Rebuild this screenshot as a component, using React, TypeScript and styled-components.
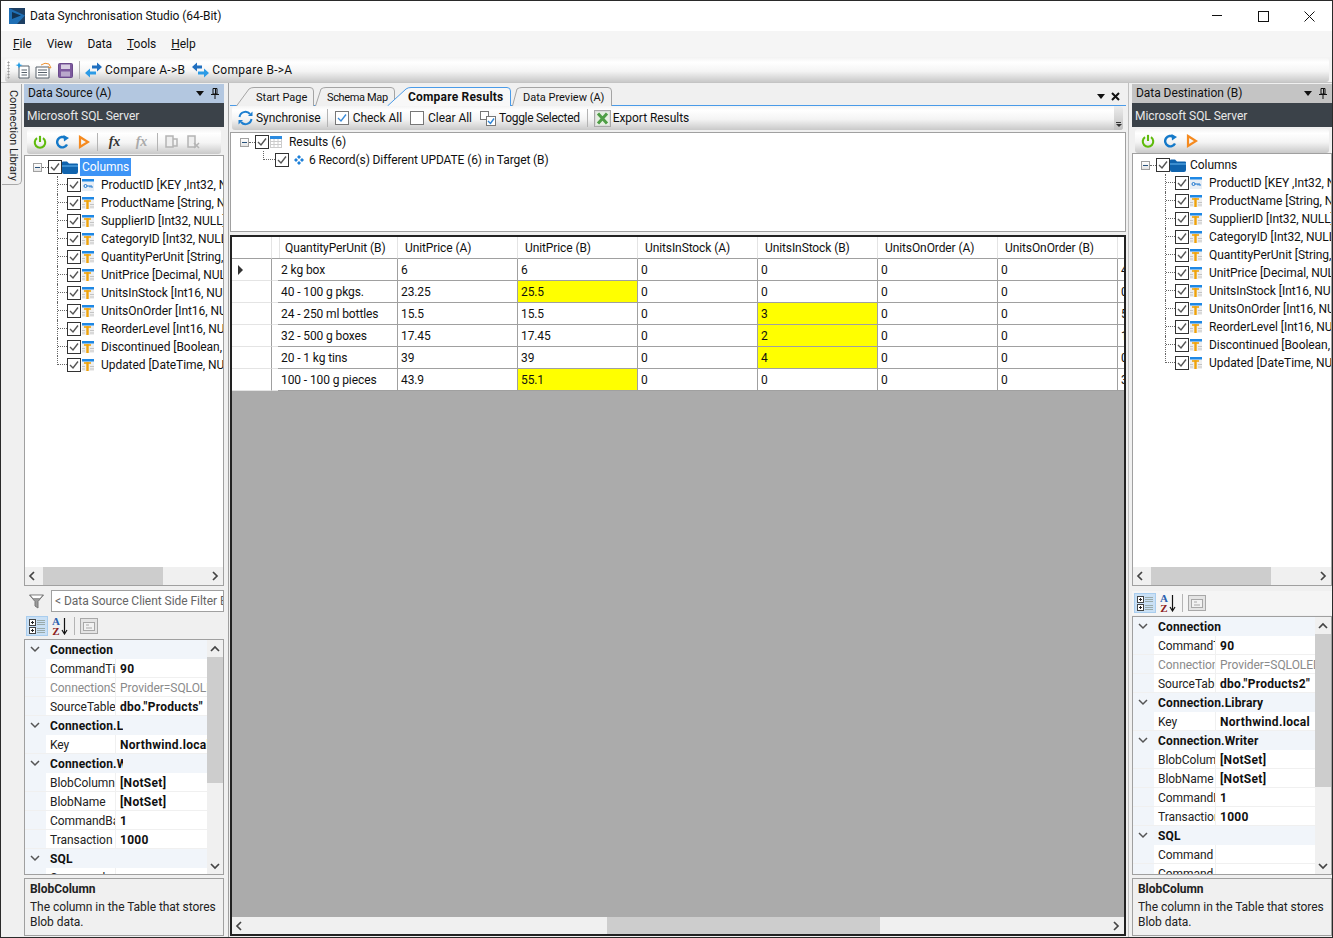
import React from "react";
import styled, { createGlobalStyle } from "styled-components";

const Global = createGlobalStyle`
  html, body { margin: 0; padding: 0; background: #f0f0f0; }
  * { box-sizing: border-box; }
  #root { width: 1333px; height: 938px; overflow: hidden; }
`;

const Win = styled.div`
  width: 1333px; height: 938px; display: flex; flex-direction: column;
  border: 1px solid #2a2a2a; background: #f0f0f0; letter-spacing: -0.05px;
  font-family: Roboto, "Liberation Sans", sans-serif; font-size: 12px; color: #111; overflow: hidden;
`;
const TitleBar = styled.div`
  height: 30px; background: #fff; display: flex; align-items: center; padding-left: 8px; flex: none;
`;
const TitleText = styled.span` margin-left: 4px; flex: 1; `;
const WinControls = styled.div` display: flex; align-items: center; `;
const WinBtn = styled.div` width: 46px; height: 30px; display: flex; align-items: center; justify-content: center; `;
const MenuBar = styled.div`
  height: 26px; flex: none; background: #f5f5f5; display: flex; align-items: center; padding-left: 12px; gap: 15px;
`;
const MenuItem = styled.span` u { text-decoration: underline; } `;
const TopStrip = styled.div` height: 26px; flex: none; background: #f3f3f3; padding: 1px 3px 1px 4px; `;
const Bar = styled.div<{ $radius?: number }>`
  display: flex; align-items: center; height: 100%;
  background: linear-gradient(#f4f4f4 0%, #ffffff 18%, #f4f4f4 55%, #c9c9c9 100%);
  border-radius: ${p => p.$radius ?? 3}px;
`;
const Grip = styled.div`
  width: 3px; height: 18px; margin: 0 5px 0 2px;
  background-image: radial-gradient(#9a9a9a 45%, transparent 50%);
  background-size: 3px 3px;
`;
const Sep = styled.div<{ $m?: string }>` width: 1px; height: 18px; background: #b4b4b4; margin: ${p => p.$m ?? "0 5px"}; flex: none; `;
const Ico = styled.span<{ $ml?: number; $mr?: number }>`
  display: inline-flex; flex: none; margin-left: ${p => p.$ml ?? 0}px; margin-right: ${p => p.$mr ?? 0}px;
`;
const BarText = styled.span<{ $ml?: number; $ls?: number }>`
  margin-left: ${p => p.$ml ?? 0}px; white-space: nowrap;
  ${p => (p.$ls !== undefined ? `letter-spacing: ${p.$ls}px;` : "")}
`;

const Main = styled.div` flex: 1; display: flex; min-height: 0; background: #f0f0f0; border-top: 1px solid #c4c4c4; margin-top: -1px; `;
const SideStrip = styled.div` width: 23px; flex: none; padding: 1px 0 0 1px; `;
const SideTab = styled.div`
  width: 20px; height: 101px; background: #f0f0f0; border: 1px solid #a8a8a8; border-top: none; border-left: none;
  border-radius: 0 0 5px 0; writing-mode: vertical-rl; padding: 6px 0 0 0; line-height: 16px; white-space: nowrap; color: #222; font-size: 11px;
`;
const Panel = styled.div` width: 200px; flex: none; display: flex; flex-direction: column; padding: 1px 0; `;
const PanelHead = styled.div<{ $active?: boolean }>`
  height: 19px; flex: none; background: ${p => (p.$active ? "#b3c7e0" : "#c4c4c4")};
  display: flex; align-items: center; padding: 0 5px 1px 4px;
`;
const PanelTitle = styled.span` flex: 1; `;
const Band = styled.div`
  height: 24px; flex: none; background: #3b4249; color: #e8e8e8; display: flex; align-items: center; padding: 1px 0 0 3px;
`;
const PanelBar = styled.div<{ $h: number; $mb: number }>`
  height: ${p => p.$h}px; flex: none; margin: 2px 3px ${p => p.$mb}px 3px;
`;
const Tree = styled.div`
  flex: 1; min-height: 0; background: #fff; border: 1px solid #a0a0a0; display: flex; flex-direction: column;
`;
const TreeBody = styled.div` flex: 1; overflow: hidden; padding: 2px 1px 0 0; `;
const Row = styled.div<{ $pl: number }>`
  height: 18px; display: flex; align-items: center; padding-left: ${p => p.$pl}px; white-space: nowrap;
`;
const Expander = styled.span`
  width: 9px; height: 9px; flex: none; border: 1px solid #a0a0a0; background: linear-gradient(#fff, #e4e4e4);
  display: flex; align-items: center; justify-content: center;
  &::after { content: ""; width: 5px; height: 1px; background: #28527c; }
`;
const DotsH = styled.span<{ $w: number }>` width: ${p => p.$w}px; flex: none; border-bottom: 1px dotted #666; height: 1px; `;
const Conn = styled.span<{ $w: number; $last?: boolean }>`
  width: ${p => p.$w}px; height: 18px; flex: none; position: relative;
  border-left: 1px dotted #666;
  ${p => (p.$last ? "height: 9px; align-self: flex-start;" : "")}
  &::after { content: ""; position: absolute; left: 0; right: 0; top: 8px; border-bottom: 1px dotted #666; }
`;
const NodeLabel = styled.span<{ $sel?: boolean; $ml?: number; $ls?: number }>`
  margin-left: ${p => p.$ml ?? 0}px; padding: 0 2px; line-height: 18px;
  ${p => (p.$ls !== undefined ? `letter-spacing: ${p.$ls}px;` : "")}
  ${p => (p.$sel ? "background: #3d94f6; color: #fff;" : "")}
`;

const HScroll = styled.div`
  height: 18px; flex: none; background: #f0f0f0; display: flex; align-items: center; justify-content: space-between; padding: 0 3px;
`;
const HTrack = styled.div<{ $pad: number; $w: number }>`
  flex: 1; height: 100%; padding-left: ${p => p.$pad}px;
  &::after { content: ""; display: block; width: ${p => p.$w}px; height: 100%; background: #cdcdcd; }
`;
const FilterRow = styled.div` height: 28px; flex: none; display: flex; align-items: center; padding: 2px 0 0 5px; `;
const FilterInput = styled.div`
  flex: 1; height: 22px; margin-left: 7px; background: #fff; border: 1px solid #a0a0a0; line-height: 20px; padding-left: 3px; color: #666;
  white-space: nowrap; overflow: hidden;
`;
const PropBar = styled.div<{ $mt: number; $light?: boolean }>`
  height: 24px; flex: none; display: flex; align-items: center; padding: 0 0 0 2px; margin: ${p => p.$mt}px 0 1px 0;
  ${p => (p.$light ? "background: #f5f5f5;" : "")}
`;
const Pressed = styled.span`
  width: 22px; height: 20px; display: inline-flex; align-items: center; justify-content: center;
  background: #c9e0f5; border: 1px solid #a9cdee; flex: none;
`;
const AZ = styled.span`
  width: 19px; height: 20px; margin-left: 3px; display: inline-flex; align-items: center; position: relative;
`;
const AZLetters = styled.span`
  display: flex; flex-direction: column; font: bold 11px/10px "Liberation Serif", serif; width: 10px; text-align: center;
`;
const LetterA = styled.span` color: #2a5fae; `;
const LetterZ = styled.span` color: #8c2020; `;
const PropGrid = styled.div<{ $h: number }>`
  height: ${p => p.$h}px; flex: none; background: #fff; border: 1px solid #a0a0a0; display: flex; overflow: hidden;
`;
const PropList = styled.div` flex: 1; min-width: 0; overflow: hidden; `;
const CatRow = styled.div`
  height: 19px; background: #f1f5fa; display: flex; align-items: center; font-weight: 700; white-space: nowrap; overflow: hidden;
  letter-spacing: 0.15px;
`;
const CatChevron = styled.span` width: 25px; padding-left: 5px; flex: none; display: flex; `;
const CatLabel = styled.span<{ $w?: number }>`
  ${p => (p.$w ? `width: ${p.$w}px; overflow: hidden;` : "")}
`;
const PropRow = styled.div` height: 19px; display: flex; border-bottom: 1px solid #f0f0f0; white-space: nowrap; `;
const Gutter = styled.span` width: 21px; flex: none; background: #f1f5fa; `;
const NameCell = styled.span<{ $w: number; $grey?: boolean }>`
  width: ${p => p.$w}px; flex: none; padding-left: 4px; overflow: hidden; line-height: 20px;
  border-right: 1px solid #f0f0f0; color: ${p => (p.$grey ? "#8a8a8a" : "#222")};
`;
const ValueCell = styled.span<{ $grey?: boolean }>`
  flex: 1; min-width: 0; padding-left: 4px; overflow: hidden; line-height: 20px;
  font-weight: ${p => (p.$grey ? 400 : 700)}; color: ${p => (p.$grey ? "#8a8a8a" : "#111")};
  letter-spacing: ${p => (p.$grey ? -0.05 : 0.3)}px;
`;
const VScroll = styled.div` width: 16px; flex: none; background: #f0f0f0; display: flex; flex-direction: column; `;
const VBtn = styled.div` height: 17px; flex: none; display: flex; align-items: center; justify-content: center; `;
const VTrack = styled.div`flex: 1; min-height: 0;`;
const VThumb = styled.div<{ $h: number }>` height: ${p => p.$h}px; background: #cdcdcd; `;
const Desc = styled.div`
  height: 58px; flex: none; margin-top: 3px; background: #f0f0f0; border: 1px solid #a0a0a0; padding: 2px 5px; line-height: 15px; color: #222;
`;
const DescTitle = styled.div` font-weight: 700; margin-bottom: 3px; line-height: 16px; `;

const Center = styled.div`
  flex: 1; min-width: 0; display: flex; flex-direction: column; margin: 0 3px 0 4px; padding: 0 2px 1px 1px;
  border-left: 1px solid #a0a0a0; border-right: 1px solid #c0c0c0;
`;
const TabStrip = styled.div`
  height: 23px; flex: none; display: flex; align-items: flex-end; padding-left: 6px; border-bottom: 1px solid #4a9be8; position: relative;
`;
const TabShape = styled.div<{ $w: number; $ml: number; $z?: number }>`
  width: ${p => p.$w}px; height: 18px; flex: none; margin-left: ${p => p.$ml}px; position: relative; z-index: ${p => p.$z ?? 0};
`;
const TabBg = styled.svg` position: absolute; left: 0; top: 0; `;
const TabLabel = styled.span<{ $pl: number; $active?: boolean; $ls: number }>`
  position: relative; display: block; padding-left: ${p => p.$pl}px; line-height: 21px; white-space: nowrap;
  font-size: ${p => (p.$active ? 12 : 11)}px; letter-spacing: ${p => p.$ls}px;
  font-weight: ${p => (p.$active ? 700 : 400)};
`;
const TabTools = styled.div` margin-left: auto; display: flex; align-items: center; gap: 6px; height: 18px; padding-right: 6px; `;
const CenterBar = styled.div` height: 24px; flex: none; margin: 0 3px 2px 2px; `;
const Overflow = styled.span`
  margin-left: auto; width: 9px; height: 100%; background: linear-gradient(#ececec, #c0c0c0); border-radius: 0 3px 3px 0;
  display: flex; flex-direction: column; align-items: center; justify-content: flex-end; padding-bottom: 3px; gap: 1px;
  &::before { content: ""; width: 5px; height: 1px; background: #333; }
  &::after { content: ""; border: 3px solid transparent; border-top-color: #333; border-bottom: none; }
`;
const ExcelWrap = styled.span`
  width: 17px; height: 17px; display: inline-flex; align-items: center; justify-content: center; flex: none;
  background: #dcdcdc; border: 1px solid #a8a8a8; margin-left: 1px;
`;
const ResultTree = styled.div`
  height: 100px; flex: none; background: #fff; border: 1px solid #a0a0a0;
`;
const DataGrid = styled.div`
  flex: 1; min-height: 0; margin-top: 3px; border: 2px solid #222; background: #ababab; display: flex; flex-direction: column;
`;
const GridArea = styled.div` flex: 1; min-height: 0; overflow: hidden; `;
const GridRow = styled.div<{ $h: number }>`
  height: ${p => p.$h}px; display: grid; grid-template-columns: 40px 6px repeat(7, 120px) 120px; background: #fff; letter-spacing: -0.1px;
`;
const HeadCell = styled.div`
  border-right: 1px solid #e4e4e4; border-bottom: 1px solid #a0a0a0; padding-left: 7px; line-height: 22px; white-space: nowrap; overflow: hidden;
`;
const RowHead = styled.div<{ $line: string; $edge: string }>`
  border-bottom: 1px solid ${p => p.$line}; border-right: 1px solid ${p => p.$edge}; display: flex; align-items: center; padding-left: 6px;
`;
const Cell = styled.div<{ $hi?: boolean }>`
  border-right: 1px solid #a0a0a0; border-bottom: 1px solid #a0a0a0; padding-left: 3px; line-height: 22px; white-space: nowrap; overflow: hidden;
  background: ${p => (p.$hi ? "#ffff00" : "#fff")};
`;
const Caret = styled.span`
  border-left: 5px solid #333; border-top: 5px solid transparent; border-bottom: 5px solid transparent;
`;
const GridScroll = styled.div` height: 17px; flex: none; background: #f0f0f0; display: flex; align-items: center; justify-content: space-between; padding: 0 3px; `;
const Fx = styled.span<{ $grey?: boolean }>`
  font: italic bold 14px "Liberation Serif", serif; width: 17px; flex: none; text-align: center; color: ${p => (p.$grey ? "#aaa" : "#333")};
`;

/* ---------- drawings ---------- */
const Logo = () => (
  <svg width="17" height="16" viewBox="0 0 17 16">
    <rect width="16" height="16" fill="#1d3f63" />
    <path d="M0 0 L16 7.5 L8 16 H0Z" fill="#1f6fb5" />
    <path d="M3 4 L12 7.5 L3 11Z" fill="#12314f" />
  </svg>
);
const Chk = ({ blue }: { blue?: boolean }) => (
  <svg width="14" height="14" viewBox="0 0 14 14" style={{ flex: "none" }}>
    <rect x=".5" y=".5" width="13" height="13" fill="#fff" stroke={blue ? "#777" : "#333"} />
    <path d="M3 7 L6 10 L11 3.5" fill="none" stroke={blue ? "#3b8bd8" : "#555"} strokeWidth="1.4" />
  </svg>
);
const Folder = () => (
  <svg width="16" height="13" viewBox="0 0 16 13">
    <path d="M0 1.5 Q0 .5 1 .5 H5 L7 2.5 H15 Q16 2.5 16 3.5 V11 Q16 13 14 13 H2 Q0 13 0 11Z" fill="#0f63ad" />
    <path d="M0 4 H16 V6 H0Z" fill="#3b8ed0" />
  </svg>
);
const ColIcon = () => (
  <svg width="12" height="12" viewBox="0 0 12 12">
    <rect width="12" height="12" fill="#eee" />
    <rect width="12" height="2.5" fill="#1e88e5" />
    <rect x="2" y="3.2" width="7" height="1.6" fill="#f0a30a" />
    <rect x="4.3" y="3.2" width="2.4" height="8.8" fill="#f0a30a" />
    <path d="M8 7.5H12M8 10H12M0 7.5H3M0 10H3" stroke="#c4c4c4" />
  </svg>
);
const KeyIcon = () => (
  <svg width="12" height="12" viewBox="0 0 12 12">
    <rect width="12" height="12" fill="#e8eef5" />
    <rect width="12" height="2.5" fill="#1e88e5" />
    <circle cx="3.5" cy="7" r="1.5" fill="none" stroke="#1e78d0" />
    <path d="M5 7H10V9M8 7V8.5" stroke="#1e78d0" fill="none" />
  </svg>
);
const TableIcon = () => (
  <svg width="12" height="12" viewBox="0 0 12 12">
    <rect x=".5" y=".5" width="11" height="11" fill="#fff" stroke="#ccc" />
    <rect width="12" height="3" fill="#2c8be0" />
    <path d="M0 5.5H12M0 8.5H12M4 3V12M8 3V12" stroke="#ccc" />
  </svg>
);
const Diamonds = () => (
  <svg width="10" height="10" viewBox="0 0 10 10">
    <path d="M5 0L7 2L5 4L3 2ZM2 3L4 5L2 7L0 5ZM8 3L10 5L8 7L6 5ZM5 6L7 8L5 10L3 8Z" fill="#1e80d8" />
  </svg>
);
const Power = () => (
  <svg width="14" height="14" viewBox="0 0 16 16" fill="none" stroke="#5fbb0c" strokeWidth="2.4">
    <path d="M4.6 3.6a6 6 0 1 0 6.8 0" /><path d="M8 1v7" />
  </svg>
);
const Refresh = () => (
  <svg width="15" height="14" viewBox="0 0 15 14">
    <path d="M12 9.5A5.2 5.2 0 1 1 10.5 3" fill="none" stroke="#1479c9" strokeWidth="2.4" />
    <path d="M8.5 0 L14 3 L9 6.5Z" fill="#1479c9" />
  </svg>
);
const Play = () => (
  <svg width="12" height="14" viewBox="0 0 12 14">
    <path d="M2 2 L10 7 L2 12Z" fill="none" stroke="#f58a1f" strokeWidth="2.2" />
  </svg>
);
const DocBtn = ({ x }: { x?: boolean }) => (
  <svg width="14" height="14" viewBox="0 0 14 14" fill="none" stroke="#b4b4b4" strokeWidth="1.5">
    <path d="M1 1H8V12H1Z" fill="#eee" />
    {x ? <path d="M7 8L12 13M12 8L7 13" /> : <path d="M8 4H12V11H8" />}
  </svg>
);
const NewDoc = () => (
  <svg width="16" height="17" viewBox="0 0 16 17" fill="none">
    <path d="M4 4H14V16H4Z" fill="#fff" stroke="#56616b" />
    <path d="M6.5 8H12M6.5 10.5H12M6.5 13H12" stroke="#56616b" />
    <path d="M4 0L5 2.5L7.5 3L5 4L4 6.5L3 4L.5 3L3 2.5Z" fill="#1c9be6" />
  </svg>
);
const OpenDoc = () => (
  <svg width="17" height="17" viewBox="0 0 17 17" fill="none">
    <path d="M1 5H14V16H1Z" fill="#fff" stroke="#56616b" />
    <path d="M3 8H12M3 10.5H12M3 13H12" stroke="#56616b" />
    <path d="M6 3Q10 0 14 2L16 6M16 6L13 5" stroke="#ee9336" />
  </svg>
);
const Save = () => (
  <svg width="15" height="15" viewBox="0 0 15 15">
    <rect x=".5" y=".5" width="14" height="14" rx="1" fill="#7d5a9e" stroke="#6b4a8c" />
    <rect x="3" y="1.5" width="9" height="4.5" fill="#d8cfe2" />
    <rect x="3" y="8.5" width="9" height="5" fill="#b9a8cb" />
  </svg>
);
const ArrowsAB = ({ flip }: { flip?: boolean }) => (
  <svg width="17" height="16" viewBox="0 0 17 16" style={flip ? { transform: "scaleX(-1)" } : undefined}>
    <path d="M7 3.5H12V.5L17 5L12 9.5V6.5H7Z" fill="#1f6fc0" />
    <path d="M11 9.5H5V6.5L0 11L5 15.5V12.5H11Z" fill="#2c9be6" />
  </svg>
);
const Sync = () => (
  <svg width="17" height="16" viewBox="0 0 17 16" fill="none" stroke="#1e7fd0" strokeWidth="2">
    <path d="M2.5 7A6 6 0 0 1 13 4" /><path d="M14.5 9A6 6 0 0 1 4 12" />
    <path d="M15.5 1.5V6H11" strokeWidth="0" fill="#1e7fd0" /><path d="M1.5 14.5V10H6" strokeWidth="0" fill="#1e7fd0" />
  </svg>
);
const Toggle = () => (
  <svg width="16" height="15" viewBox="0 0 16 15" fill="none">
    <rect x=".5" y=".5" width="8" height="8" fill="#fff" stroke="#777" />
    <rect x="6.5" y="5.5" width="9" height="9" fill="#fff" stroke="#777" />
    <path d="M8 10L10.5 12.5L14 7.5" stroke="#2d84d6" strokeWidth="1.4" />
  </svg>
);
const EmptyBox = () => (
  <svg width="14" height="14" viewBox="0 0 14 14"><rect x=".5" y=".5" width="13" height="13" fill="#fff" stroke="#777" /></svg>
);
const Excel = () => (
  <svg width="13" height="13" viewBox="0 0 13 13">
    <rect width="13" height="13" fill="#e6efe2" />
    <path d="M2 1.5L11 11.5M11 1.5L2 11.5" stroke="#4f9e46" strokeWidth="3" />
  </svg>
);
const Funnel = () => (
  <svg width="15" height="15" viewBox="0 0 15 15">
    <path d="M.5 1H14.5L9 7.5V14L6 12V7.5Z" fill="#9a9a9a" stroke="#777" />
    <path d="M2 1.5H13L11 4H4Z" fill="#fff" />
  </svg>
);
const Cats = () => (
  <svg width="16" height="15" viewBox="0 0 16 15" fill="none">
    <rect x=".5" y=".5" width="6" height="6" fill="#fff" stroke="#444" />
    <rect x=".5" y="8.5" width="6" height="6" fill="#fff" stroke="#444" />
    <path d="M2 3.5H5M3.5 2V5M2 11.5H5M3.5 10V13" stroke="#222" />
    <path d="M8 1.5H16M8 3.5H16M8 5.5H16M8 9.5H16M8 11.5H16M8 13.5H16" stroke="#9aa" />
  </svg>
);
const DownArrow = () => (
  <svg width="7" height="18" viewBox="0 0 7 18"><path d="M3.5 1V16M1 13L3.5 17L6 13" stroke="#111" fill="none" strokeWidth="1.2" /></svg>
);
const PageIcon = () => (
  <svg width="18" height="16" viewBox="0 0 18 16" fill="none" stroke="#a8a8a8">
    <rect x=".5" y=".5" width="17" height="15" fill="#e4e4e4" />
    <rect x="3.5" y="4.5" width="11" height="8" fill="#f2f2f2" />
    <path d="M6 7H9M6 10H12" />
  </svg>
);
const DropTri = () => <svg width="8" height="5" viewBox="0 0 8 5"><path d="M0 0H8L4 5Z" fill="#111" /></svg>;
const Pin = () => (
  <svg width="8" height="11" viewBox="0 0 8 11" fill="none" stroke="#111">
    <path d="M2 .5H6V6H2Z" /><path d="M4.5 1V6" /><path d="M0 6.5H8" /><path d="M4 7V11" />
  </svg>
);
const CloseX = () => <svg width="9" height="9" viewBox="0 0 9 9"><path d="M1 1L8 8M8 1L1 8" stroke="#111" strokeWidth="2" /></svg>;
const Chev = ({ dir, color = "#444" }: { dir: "l" | "r" | "u" | "d"; color?: string }) => {
  const d = { l: "M6 1L2 5L6 9", r: "M3 1L7 5L3 9", u: "M1 7L5 3L9 7", d: "M1 3L5 7L9 3" }[dir];
  return <svg width="10" height="10" viewBox="0 0 10 10"><path d={d} fill="none" stroke={color} strokeWidth="1.7" /></svg>;
};
const CatChev = () => <svg width="10" height="7" viewBox="0 0 10 7"><path d="M1 1L5 5L9 1" fill="none" stroke="#555" strokeWidth="1.5" /></svg>;

/* ---------- data ---------- */
const columns = [
  "ProductID [KEY ,Int32, NOT NULL]", "ProductName [String, NOT NULL]", "SupplierID [Int32, NULL]", "CategoryID [Int32, NULL]",
  "QuantityPerUnit [String, NULL]", "UnitPrice [Decimal, NULL]", "UnitsInStock [Int16, NULL]", "UnitsOnOrder [Int16, NULL]",
  "ReorderLevel [Int16, NULL]", "Discontinued [Boolean, NOT NULL]", "Updated [DateTime, NULL]",
];
type P = { cat?: string; n?: string; v?: string; grey?: boolean };
const leftProps: P[] = [
  { cat: "Connection" }, { n: "CommandTimeout", v: "90" }, { n: "ConnectionString", v: "Provider=SQLOLEDB", grey: true }, { n: "SourceTable", v: 'dbo."Products"' },
  { cat: "Connection.Library" }, { n: "Key", v: "Northwind.local" },
  { cat: "Connection.Writer" }, { n: "BlobColumn", v: "[NotSet]" }, { n: "BlobName", v: "[NotSet]" }, { n: "CommandBatch", v: "1" }, { n: "Transaction", v: "1000" },
  { cat: "SQL" }, { n: "Command", v: "" },
];
const rightProps: P[] = [
  { cat: "Connection" }, { n: "CommandTimeout", v: "90" }, { n: "ConnectionString", v: "Provider=SQLOLEDB", grey: true }, { n: "SourceTable", v: 'dbo."Products2"' },
  { cat: "Connection.Library" }, { n: "Key", v: "Northwind.local" },
  { cat: "Connection.Writer" }, { n: "BlobColumn", v: "[NotSet]" }, { n: "BlobName", v: "[NotSet]" }, { n: "CommandBatch", v: "1" }, { n: "Transaction", v: "1000" },
  { cat: "SQL" }, { n: "Command", v: "" }, { n: "Command", v: "" },
];
const heads = ["QuantityPerUnit (B)", "UnitPrice (A)", "UnitPrice (B)", "UnitsInStock (A)", "UnitsInStock (B)", "UnitsOnOrder (A)", "UnitsOnOrder (B)", ""];
const rows: (string | [string])[][] = [
  ["2 kg box", "6", "6", "0", "0", "0", "0", "4"],
  ["40 - 100 g pkgs.", "23.25", ["25.5"], "0", "0", "0", "0", "0"],
  ["24 - 250 ml bottles", "15.5", "15.5", "0", ["3"], "0", "0", "5"],
  ["32 - 500 g boxes", "17.45", "17.45", "0", ["2"], "0", "0", "1"],
  ["20 - 1 kg tins", "39", "39", "0", ["4"], "0", "0", "0"],
  ["100 - 100 g pieces", "43.9", ["55.1"], "0", "0", "0", "0", "3"],
];
const tabs = [
  { t: "Start Page", w: 78, ml: 0, slant: 14, pl: 20, ls: 0 },
  { t: "Schema Map", w: 80, ml: 1, slant: 7, pl: 12, ls: -0.35 },
  { t: "Compare Results", w: 124, ml: -8, slant: 20, pl: 21, ls: 0.2, active: true },
  { t: "Data Preview (A)", w: 100, ml: 1, slant: 6, pl: 11, ls: 0 },
];

/* ---------- parts ---------- */
const ColumnTree = ({ selected }: { selected?: boolean }) => (
  <TreeBody>
    <Row $pl={8}>
      <Expander /><DotsH $w={6} /><Chk />
      <Folder />
      <NodeLabel $sel={selected} $ml={2}>Columns</NodeLabel>
    </Row>
    {columns.map((c, i) => (
      <Row key={c} $pl={32}>
        <Conn $w={10} $last={i === columns.length - 1} /><Chk />
        <Ico $ml={1}>{i === 0 ? <KeyIcon /> : <ColIcon />}</Ico>
        <NodeLabel $ml={5}>{c}</NodeLabel>
      </Row>
    ))}
  </TreeBody>
);
const Props = ({ data, h, name, thumb, catW }: { data: P[]; h: number; name: number; thumb: number; catW?: number }) => (
  <PropGrid $h={h}>
    <PropList>
      {data.map((p, i) =>
        p.cat ? (
          <CatRow key={i}>
            <CatChevron><CatChev /></CatChevron>
            <CatLabel $w={p.cat.includes(".") ? catW : undefined}>{p.cat}</CatLabel>
          </CatRow>
        ) : (
          <PropRow key={i}>
            <Gutter />
            <NameCell $w={name} $grey={p.grey}>{p.n}</NameCell>
            <ValueCell $grey={p.grey}>{p.v}</ValueCell>
          </PropRow>
        ),
      )}
    </PropList>
    <VScroll>
      <VBtn><Chev dir="u" /></VBtn>
      <VTrack><VThumb $h={thumb} /></VTrack>
      <VBtn><Chev dir="d" /></VBtn>
    </VScroll>
  </PropGrid>
);
const PropTools = () => (
  <>
    <Pressed><Cats /></Pressed>
    <AZ>
      <AZLetters><LetterA>A</LetterA><LetterZ>Z</LetterZ></AZLetters>
      <DownArrow />
    </AZ>
    <Sep $m="0 5px 0 4px" />
    <PageIcon />
  </>
);
const RunTools = () => (
  <>
    <Ico $ml={6}><Power /></Ico>
    <Ico $ml={8}><Refresh /></Ico>
    <Ico $ml={8}><Play /></Ico>
  </>
);

const Head = ({ title, active }: { title: string; active?: boolean }) => (
  <>
    <PanelHead $active={active}>
      <PanelTitle>{title}</PanelTitle>
      <DropTri />
      <Ico $ml={7}><Pin /></Ico>
    </PanelHead>
    <Band>Microsoft SQL Server</Band>
  </>
);

export default function App() {
  return (
    <Win>
      <Global />
      <TitleBar>
        <Logo />
        <TitleText>Data Synchronisation Studio (64-Bit)</TitleText>
        <WinControls>
          <WinBtn><svg width="11" height="2"><path d="M0 .5H10" stroke="#111" /></svg></WinBtn>
          <WinBtn><svg width="11" height="11"><rect x=".5" y=".5" width="10" height="10" fill="none" stroke="#111" /></svg></WinBtn>
          <WinBtn><svg width="11" height="11"><path d="M.5 .5L10.5 10.5M10.5 .5L.5 10.5" stroke="#111" /></svg></WinBtn>
        </WinControls>
      </TitleBar>
      <MenuBar>
        <MenuItem><u>F</u>ile</MenuItem>
        <MenuItem>View</MenuItem>
        <MenuItem>Data</MenuItem>
        <MenuItem><u>T</u>ools</MenuItem>
        <MenuItem><u>H</u>elp</MenuItem>
      </MenuBar>
      <TopStrip>
        <Bar>
          <Grip />
          <NewDoc />
          <Ico $ml={4}><OpenDoc /></Ico>
          <Ico $ml={6}><Save /></Ico>
          <Sep $m="0 5px 0 6px" />
          <ArrowsAB />
          <BarText $ml={3} $ls={0.3}>Compare A-&gt;B</BarText>
          <Ico $ml={7}><ArrowsAB flip /></Ico>
          <BarText $ml={3} $ls={0.3}>Compare B-&gt;A</BarText>
        </Bar>
      </TopStrip>
      <Main>
        <SideStrip><SideTab>Connection Library</SideTab></SideStrip>

        <Panel>
          <Head title="Data Source (A)" active />
          <PanelBar $h={25} $mb={1}>
            <Bar>
              <RunTools />
              <Sep $m="0 8px 0 7px" />
              <Fx>fx</Fx>
              <Ico $ml={10}><Fx $grey>fx</Fx></Ico>
              <Sep $m="0 7px 0 7px" />
              <DocBtn />
              <Ico $ml={8}><DocBtn x /></Ico>
            </Bar>
          </PanelBar>
          <Tree>
            <ColumnTree selected />
            <HScroll>
              <Chev dir="l" />
              <HTrack $pad={5} $w={120} />
              <Chev dir="r" />
            </HScroll>
          </Tree>
          <FilterRow>
            <Funnel />
            <FilterInput>&lt; Data Source Client Side Filter Expression &gt;</FilterInput>
          </FilterRow>
          <PropBar $mt={0}><PropTools /></PropBar>
          <Props data={leftProps} h={236} name={70} thumb={126} catW={73} />
          <Desc>
            <DescTitle>BlobColumn</DescTitle>
            The column in the Table that stores Blob data.
          </Desc>
        </Panel>

        <Center>
          <TabStrip>
            {tabs.map(t => (
              <TabShape key={t.t} $w={t.w} $ml={t.ml} $z={t.active ? 2 : 0}>
                <TabBg width={t.w} height="19" viewBox={`0 0 ${t.w} 19`}>
                  <path
                    d={`M.5 19 L${t.slant - 1} 2 Q${t.slant + 1} .5 ${t.slant + 4} .5 H${t.w - 4} Q${t.w - .5} .5 ${t.w - .5} 4 V19`}
                    fill={t.active ? "#f8f8f8" : "#f0f0f0"}
                    stroke={t.active ? "#4a9be8" : "#a4a4a4"}
                  />
                </TabBg>
                <TabLabel $pl={t.pl} $active={t.active} $ls={t.ls}>{t.t}</TabLabel>
              </TabShape>
            ))}
            <TabTools><DropTri /><CloseX /></TabTools>
          </TabStrip>
          <CenterBar>
            <Bar>
              <Ico $ml={5}><Sync /></Ico>
              <BarText $ml={2}>Synchronise</BarText>
              <Sep $m="0 7px 0 6px" />
              <Chk blue />
              <BarText $ml={4}>Check All</BarText>
              <Ico $ml={8}><EmptyBox /></Ico>
              <BarText $ml={4}>Clear All</BarText>
              <Ico $ml={8}><Toggle /></Ico>
              <BarText $ml={3} $ls={-0.3}>Toggle Selected</BarText>
              <Sep $m="0 5px 0 7px" />
              <ExcelWrap><Excel /></ExcelWrap>
              <BarText $ml={2}>Export Results</BarText>
              <Overflow />
            </Bar>
          </CenterBar>
          <ResultTree>
            <Row $pl={9}>
              <Expander /><DotsH $w={6} /><Chk />
              <Ico $ml={1}><TableIcon /></Ico>
              <NodeLabel $ml={5}>Results (6)</NodeLabel>
            </Row>
            <Row $pl={32}>
              <Conn $w={12} $last /><Chk />
              <Ico $ml={5}><Diamonds /></Ico>
              <NodeLabel $ml={3} $ls={-0.1}>6 Record(s) Different UPDATE (6) in Target (B)</NodeLabel>
            </Row>
          </ResultTree>
          <DataGrid>
            <GridArea>
              <GridRow $h={22}>
                <HeadCell /><HeadCell />
                {heads.map((h, i) => <HeadCell key={i}>{h}</HeadCell>)}
              </GridRow>
              {rows.map((r, i) => (
                <GridRow key={i} $h={22}>
                  <RowHead $line="#e4e4e4" $edge="#a0a0a0">{i === 0 ? <Caret /> : null}</RowHead>
                  <RowHead $line="#e4e4e4" $edge="#a0a0a0" />
                  {r.map((c, j) => {
                    const hi = Array.isArray(c);
                    return <Cell key={j} $hi={hi}>{hi ? c[0] : c}</Cell>;
                  })}
                </GridRow>
              ))}
            </GridArea>
            <GridScroll>
              <Chev dir="l" />
              <HTrack $pad={362} $w={273} />
              <Chev dir="r" />
            </GridScroll>
          </DataGrid>
        </Center>

        <Panel>
          <Head title="Data Destination (B)" />
          <PanelBar $h={24} $mb={0}>
            <Bar><RunTools /></Bar>
          </PanelBar>
          <Tree>
            <ColumnTree />
            <HScroll>
              <Chev dir="l" />
              <HTrack $pad={5} $w={120} />
              <Chev dir="r" />
            </HScroll>
          </Tree>
          <PropBar $mt={5} $light><PropTools /></PropBar>
          <Props data={rightProps} h={259} name={62} thumb={153} />
          <Desc>
            <DescTitle>BlobColumn</DescTitle>
            The column in the Table that stores Blob data.
          </Desc>
        </Panel>
      </Main>
    </Win>
  );
}
